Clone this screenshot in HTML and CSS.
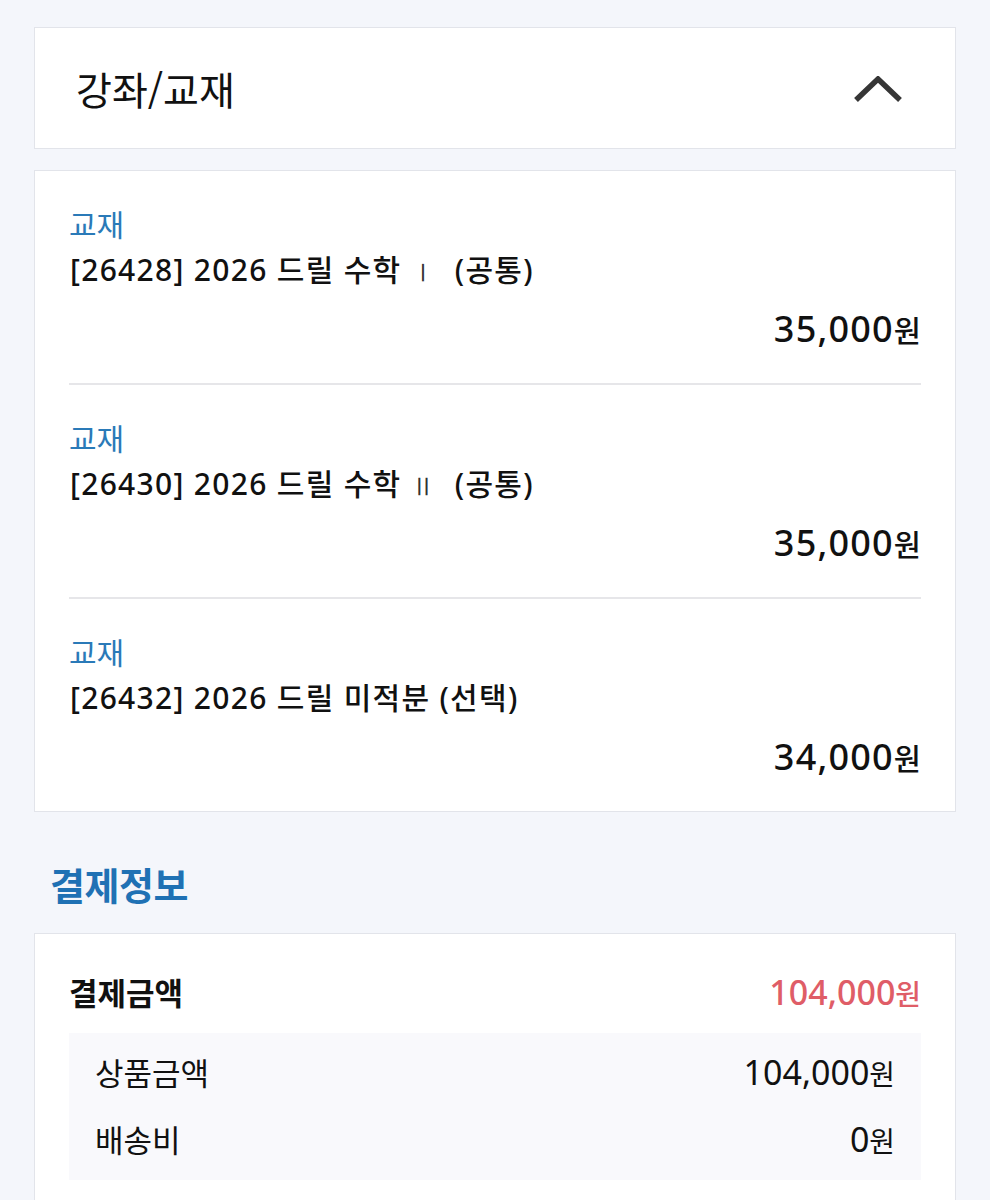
FILE: index.html
```html
<!DOCTYPE html>
<html lang="ko">
<head>
<meta charset="utf-8">
<title>강좌/교재</title>
<link rel="stylesheet" href="styles.css">
</head>
<body>
<div class="page">
  <section class="card header-card">
    <h2 class="header-title">강좌/교재</h2>
    <svg class="chevron" width="50" height="28" viewBox="0 0 50 28" aria-hidden="true">
      <polyline points="3,24 25,3 47,24" fill="none" stroke="#363636" stroke-width="5.5" stroke-linejoin="miter"/>
    </svg>
  </section>

  <section class="card items-card">
    <div class="item">
      <div class="item-cat">교재</div>
      <div class="item-title">[26428] 2026 드릴 수학<span class="roman">Ⅰ</span>(공통)</div>
      <div class="item-price">35,000<span class="won">원</span></div>
    </div>
    <div class="item">
      <div class="item-cat">교재</div>
      <div class="item-title">[26430] 2026 드릴 수학<span class="roman">Ⅱ</span>(공통)</div>
      <div class="item-price">35,000<span class="won">원</span></div>
    </div>
    <div class="item">
      <div class="item-cat">교재</div>
      <div class="item-title">[26432] 2026 드릴 미적분 (선택)</div>
      <div class="item-price">34,000<span class="won">원</span></div>
    </div>
  </section>

  <h3 class="section-title">결제정보</h3>

  <section class="card pay-card">
    <div class="pay-total">
      <span class="pay-label">결제금액</span>
      <span class="pay-amount">104,000<span class="won">원</span></span>
    </div>
    <div class="pay-detail">
      <div class="pay-row"><span class="pay-key">상품금액</span><span class="pay-val">104,000<span class="won">원</span></span></div>
      <div class="pay-row"><span class="pay-key">배송비</span><span class="pay-val">0<span class="won">원</span></span></div>
    </div>
  </section>
</div>
</body>
</html>
```

FILE: styles.css
```css
html, body {
  margin: 0;
  padding: 0;
  background: #f4f6fb;
}
body {
  font-family: "Noto Sans", "Noto Sans CJK KR", sans-serif;
  color: #111;
}
.page {
  padding: 27px 34px 0 34px;
}
.card {
  background: #fff;
  border: 1px solid #e2e4ea;
  box-sizing: border-box;
}
.header-card {
  height: 122px;
  display: flex;
  align-items: center;
  justify-content: space-between;
  padding: 0 52px 0 41px;
}
.header-title {
  margin: 0;
  font-family: "Noto Sans CJK KR", sans-serif;
  font-size: 39px;
  font-weight: 400;
  color: #111;
}
.chevron {
  display: block;
  margin-top: 4px;
}
.items-card {
  margin-top: 21px;
  padding: 0 34px;
}
.item {
  padding: 32px 0 34px;
  border-bottom: 2px solid #e6e6e9;
}
.item:last-child {
  border-bottom: none;
}
.item-cat {
  height: 40px;
  font-family: "Noto Sans CJK KR", sans-serif;
  font-size: 30px;
  line-height: 40px;
  color: #2a7ab8;
}
.item-title {
  height: 54px;
  font-size: 30px;
  line-height: 54px;
  font-weight: 500;
  letter-spacing: 1.3px;
  padding-left: 1px;
  white-space: nowrap;
}
.roman {
  font-family: "Noto Sans", sans-serif;
  font-weight: 300;
  font-size: 24px;
  line-height: 1;
  color: #333;
  margin: 0 18px 0 10px;
}
.item-price {
  height: 40px;
  margin-top: 12px;
  text-align: right;
  font-size: 36px;
  line-height: 40px;
  font-weight: 500;
  letter-spacing: 1.2px;
}
.won {
  font-family: "Noto Sans CJK KR", sans-serif;
  font-size: 0.82em;
  font-weight: 500;
  line-height: 1;
  letter-spacing: 0;
}
.section-title {
  margin: 50px 0 27px 16px;
  font-family: "Noto Sans CJK KR", sans-serif;
  font-size: 38px;
  line-height: 44px;
  font-weight: 700;
  color: #1f71b4;
  letter-spacing: -0.5px;
}
.pay-card {
  padding: 38px 34px 40px;
}
.pay-total {
  height: 40px;
  display: flex;
  justify-content: space-between;
  align-items: center;
  line-height: 40px;
}
.pay-label {
  font-family: "Noto Sans CJK KR", sans-serif;
  font-size: 31px;
  font-weight: 700;
}
.pay-amount {
  font-size: 34px;
  font-weight: 500;
  color: #df5d67;
}
.pay-detail {
  margin-top: 21px;
  background: #f9f9fc;
  padding: 17px 26px 19px;
  display: flex;
  flex-direction: column;
  gap: 23px;
}
.pay-row {
  height: 44px;
  display: flex;
  justify-content: space-between;
  align-items: center;
  line-height: 44px;
  color: #111;
}
.pay-key {
  font-family: "Noto Sans CJK KR", sans-serif;
  font-size: 31px;
}
.pay-val {
  font-size: 34px;
  font-weight: 400;
}
.pay-val .won {
  font-weight: 400;
}
```
